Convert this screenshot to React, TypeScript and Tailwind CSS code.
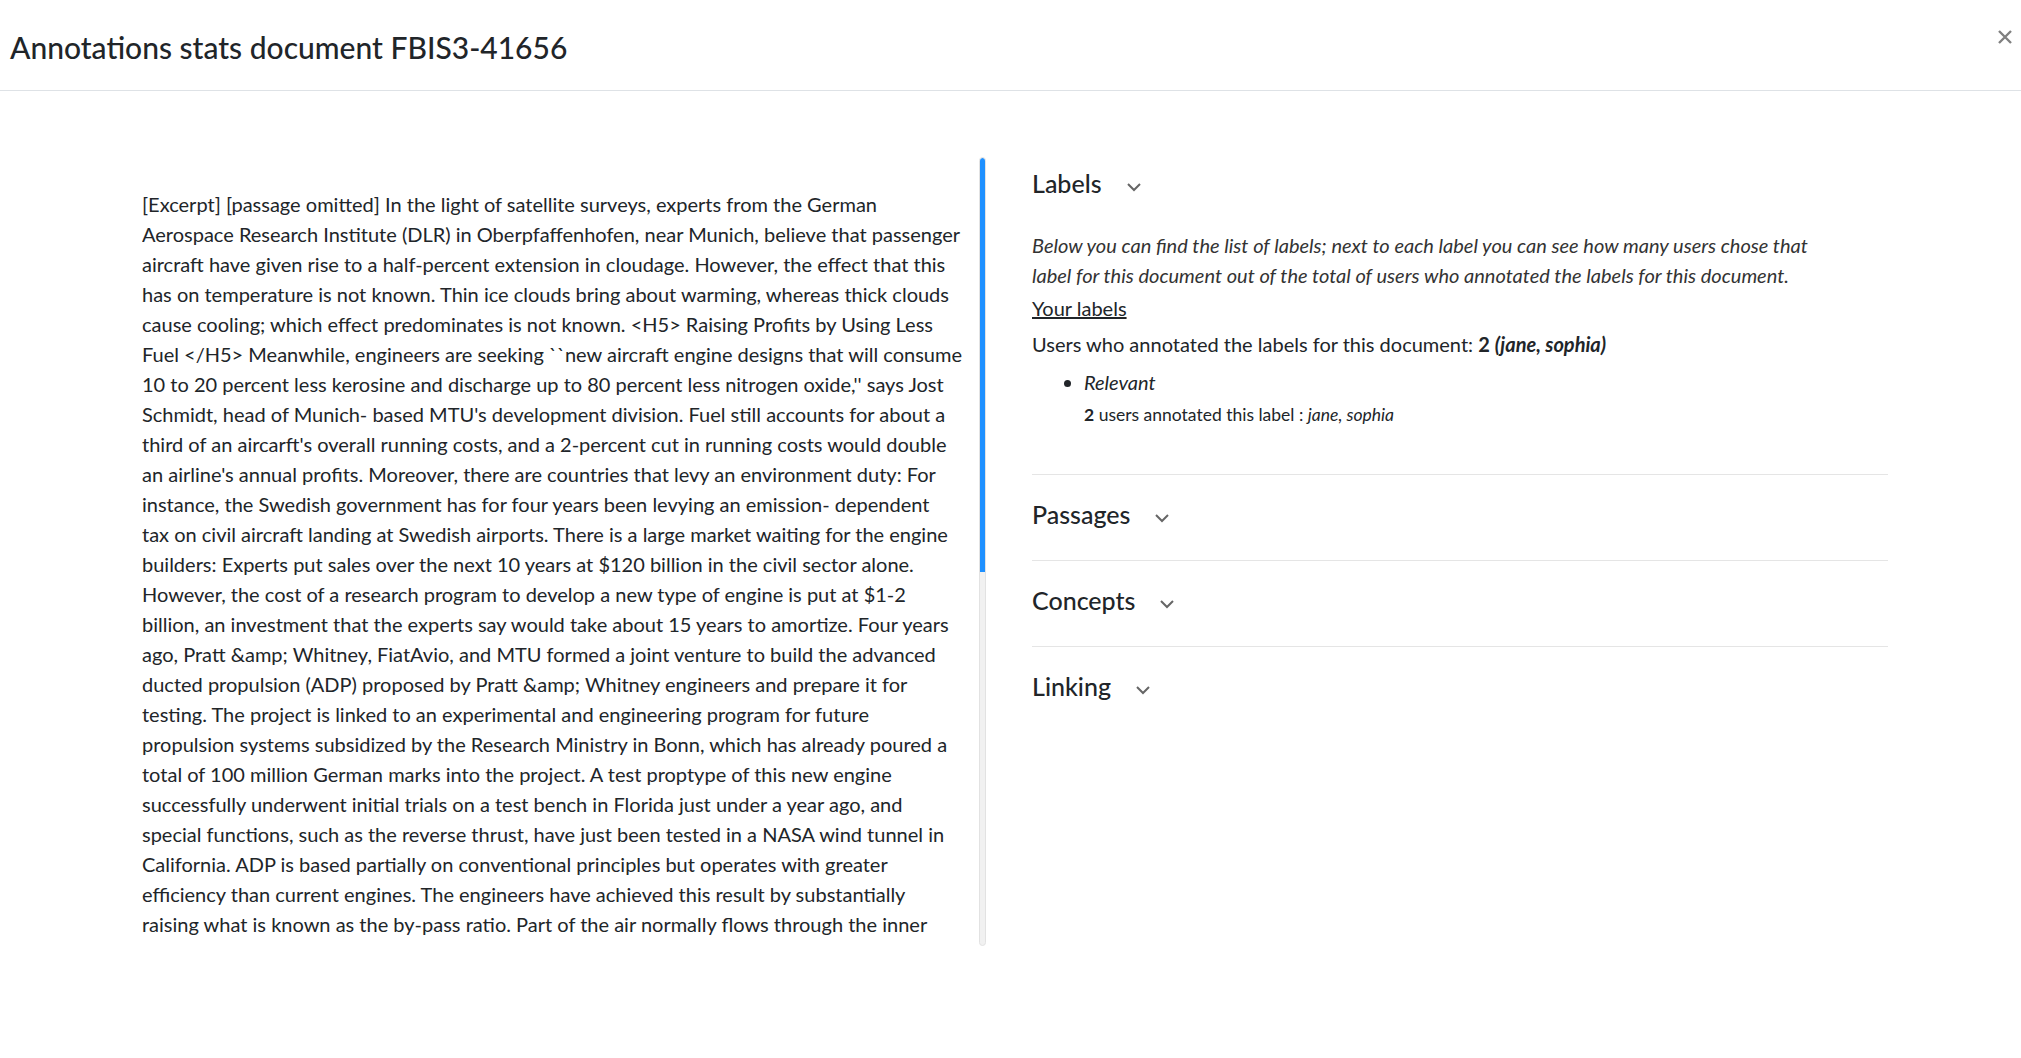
import React from 'react'

const lines = [
  '[Excerpt] [passage omitted] In the light of satellite surveys, experts from the German',
  'Aerospace Research Institute (DLR) in Oberpfaffenhofen, near Munich, believe that passenger',
  'aircraft have given rise to a half-percent extension in cloudage. However, the effect that this',
  'has on temperature is not known. Thin ice clouds bring about warming, whereas thick clouds',
  'cause cooling; which effect predominates is not known. <H5> Raising Profits by Using Less',
  'Fuel </H5> Meanwhile, engineers are seeking ``new aircraft engine designs that will consume',
  "10 to 20 percent less kerosine and discharge up to 80 percent less nitrogen oxide,'' says Jost",
  "Schmidt, head of Munich- based MTU's development division. Fuel still accounts for about a",
  "third of an aircarft's overall running costs, and a 2-percent cut in running costs would double",
  "an airline's annual profits. Moreover, there are countries that levy an environment duty: For",
  'instance, the Swedish government has for four years been levying an emission- dependent',
  'tax on civil aircraft landing at Swedish airports. There is a large market waiting for the engine',
  'builders: Experts put sales over the next 10 years at $120 billion in the civil sector alone.',
  'However, the cost of a research program to develop a new type of engine is put at $1-2',
  'billion, an investment that the experts say would take about 15 years to amortize. Four years',
  'ago, Pratt &amp; Whitney, FiatAvio, and MTU formed a joint venture to build the advanced',
  'ducted propulsion (ADP) proposed by Pratt &amp; Whitney engineers and prepare it for',
  'testing. The project is linked to an experimental and engineering program for future',
  'propulsion systems subsidized by the Research Ministry in Bonn, which has already poured a',
  'total of 100 million German marks into the project. A test proptype of this new engine',
  'successfully underwent initial trials on a test bench in Florida just under a year ago, and',
  'special functions, such as the reverse thrust, have just been tested in a NASA wind tunnel in',
  'California. ADP is based partially on conventional principles but operates with greater',
  'efficiency than current engines. The engineers have achieved this result by substantially',
  'raising what is known as the by-pass ratio. Part of the air normally flows through the inner',
]

function Chevron() {
  return (
    <svg width="16" height="10" viewBox="0 0 16 10" className="shrink-0 mt-[8px]">
      <path d="M2 2 L8 8 L14 2" fill="none" stroke="#666" strokeWidth="2" />
    </svg>
  )
}

function SectionHeading({ title }: { title: string }) {
  return (
    <div className="flex items-center gap-[24px] h-[30px]">
      <h5 className="text-[25px] leading-[30px] font-medium text-[#212529]">{title}</h5>
      <Chevron />
    </div>
  )
}

export default function App() {
  return (
    <div className="w-[2021px] h-[1058px] bg-white text-[#212529] font-['Segoe_UI',Lato,sans-serif] overflow-hidden">
      <div className="h-[91px] border-b border-[#dee2e6] flex items-center justify-between pl-[10px] pr-[4px]">
        <h4 className="text-[30px] font-medium leading-[36px] mt-[3px]">Annotations stats document FBIS3-41656</h4>
        <button className="w-[24px] h-[24px] flex items-center justify-center mt-[-17px]">
          <svg width="16" height="16" viewBox="0 0 16 16">
            <path d="M2 2 L14 14 M14 2 L2 14" stroke="#808080" strokeWidth="2.4" />
          </svg>
        </button>
      </div>

      <div className="flex pt-[66px]">
        <div className="flex ml-[142px] w-[845px]">
          <div className="w-[837px] h-[783px] overflow-hidden pt-[32px] text-[20px] leading-[30px]">
            {lines.map((l, i) => (
              <div key={i} className="whitespace-nowrap">{l}</div>
            ))}
          </div>
          <div className="w-[7px] h-[789px] rounded-full bg-[#f1f1f1] border border-[#e2e2e2] overflow-hidden">
            <div className="h-[414px] bg-[#1e90ff] rounded-t-full"></div>
          </div>
        </div>

        <div className="ml-[45px] w-[856px] pt-[11px]">
          <div>
            <SectionHeading title="Labels" />
            <div className="mt-[32px] text-[20px] leading-[30px]">
              <p className="italic text-[#333]">
                Below you can find the list of labels; next to each label you can see how many users chose that
                <br />
                label for this document out of the total of users who annotated the labels for this document.
              </p>
              <div className="mt-[3px]">
                <span className="underline text-[#212529]">Your labels</span>
              </div>
              <div className="mt-[6px]">
                Users who annotated the labels for this document: <b>2 <i>(jane, sophia)</i></b>
              </div>
              <ul className="list-disc pl-[52px] mt-[8px]">
                <li className="italic">Relevant</li>
              </ul>
              <div className="pl-[52px] text-[17.5px] leading-[26px] mt-[5px]">
                <b>2</b> users annotated this label : <i>jane, sophia</i>
              </div>
            </div>
            <div className="border-b border-[#e5e5e5] mt-[46px]"></div>
          </div>

          {['Passages', 'Concepts', 'Linking'].map((t, i) => (
            <div key={t} className={i < 2 ? 'border-b border-[#e5e5e5] pt-[24px] pb-[31px]' : 'pt-[24px] pb-[31px]'}>
              <SectionHeading title={t} />
            </div>
          ))}
        </div>
      </div>
    </div>
  )
}
